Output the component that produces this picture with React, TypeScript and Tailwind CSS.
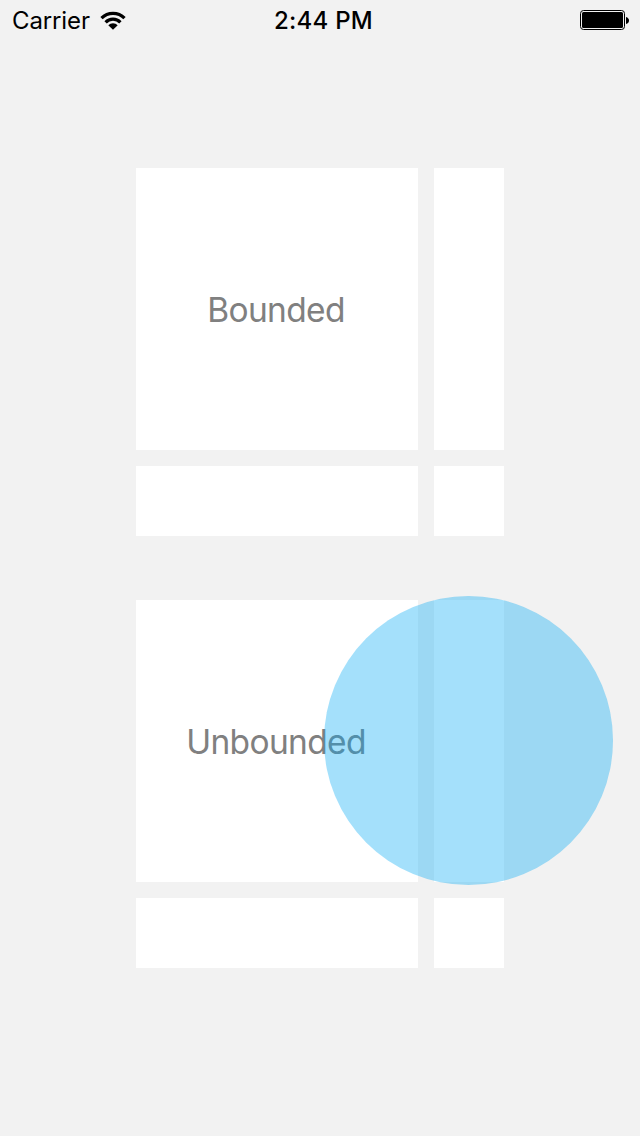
function Grid({ label, ripple = false }: { label: string; ripple?: boolean }) {
  return (
    <div className="relative grid h-[368px] w-[368px] grid-cols-[282px_70px] grid-rows-[282px_70px] gap-4">
      <div className="flex items-center justify-center bg-white pr-0.5 pt-px">
        <span className="whitespace-nowrap text-[33.5px] leading-10 tracking-[-0.65px] text-[#808080]">{label}</span>
      </div>
      <div className="bg-white" />
      <div className="bg-white" />
      <div className="bg-white" />
      {ripple && <div className="absolute left-[188px] top-[-4px] h-[289px] w-[289px] rounded-full bg-[#03a9f4]/36" />}
    </div>
  );
}

export default function App() {
  return (
    <main className="h-[1136px] w-[640px] overflow-hidden bg-[#f2f2f2] font-['Inter',sans-serif]">
      <header className="grid h-10 grid-cols-[1fr_120px_1fr] items-center pl-3 pr-[11px] text-black">
        <div className="flex items-center gap-2.5">
          <span className="pt-0.5 text-[24px] leading-[38px] tracking-[-0.12px]">Carrier</span>
          <svg className="h-[19px] w-[26px]" viewBox="0 0 26 19" fill="none" stroke="black" strokeWidth="3.3">
            <path d="M1.5 7.2a16.3 16.3 0 0 1 23 0M5.6 11.3a10.4 10.4 0 0 1 14.8 0" />
            <path d="M13 18.8 8.3 14.2a6.5 6.5 0 0 1 9.4 0Z" fill="black" stroke="none" />
          </svg>
        </div>
        <time className="whitespace-nowrap pl-1.5 pt-0.5 text-center text-[24px] font-medium leading-[38px] tracking-[0.25px]">2:44 PM</time>
        <svg className="h-5 w-[49px] justify-self-end" viewBox="0 0 49 20">
          <rect x=".5" y=".5" width="44" height="19" rx="3" fill="none" stroke="black" />
          <rect x="2" y="2" width="41" height="16" rx="1.5" />
          <path d="M46 7q3 1 3 3.5t-3 3.5Z" />
        </svg>
      </header>
      <div className="mt-32 flex flex-col items-center gap-16">
        <Grid label="Bounded" />
        <Grid label="Unbounded" ripple />
      </div>
    </main>
  );
}
